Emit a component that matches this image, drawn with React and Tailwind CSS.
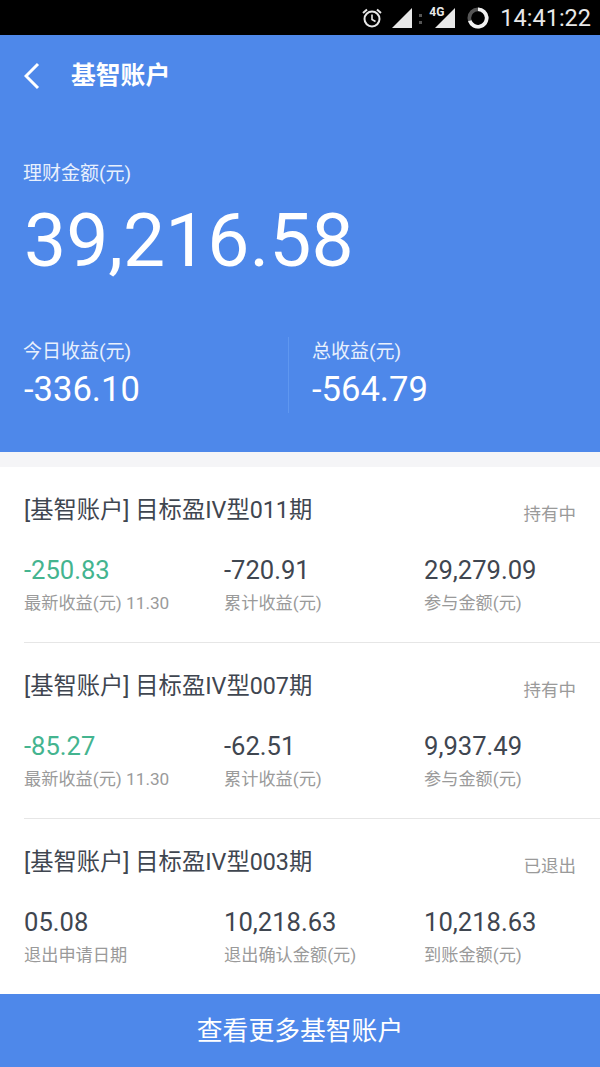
const cjk = "font-['Roboto','Noto_Sans_CJK_SC',sans-serif]";

function Row({ title, status, cols }) {
  return (
    <div className="h-[175px] pl-6 flex flex-col">
      <div className="flex items-start justify-between pr-6 pt-[27px] h-[71px]">
        <div className="text-[23.3px] leading-[32px] text-[#3f4650]">{title}</div>
        <div className="text-[17.5px] leading-[26px] text-[#9a9a9a] mt-[7px]">{status}</div>
      </div>
      <div className="grid grid-cols-[200px_200px_1fr] mt-[15px]">
        {cols.map((c, i) => (
          <div key={i} className="flex flex-col">
            <div className={`text-[25.6px] leading-[34px] ${c.green ? "text-[#44b48f]" : "text-[#3f4650]"}`}>{c.value}</div>
            <div className="text-[17.2px] leading-[24px] mt-[4px] text-[#9a9a9a] whitespace-nowrap">{c.label}</div>
          </div>
        ))}
      </div>
    </div>
  );
}

function StatusBar() {
  return (
    <div className="h-[35px] bg-black flex items-center justify-end pr-[9px] text-[#e8e8e8]">
      <svg width="22" height="22" viewBox="0 0 22 22" fill="none" stroke="currentColor" strokeWidth="2" className="mr-[9px] mt-[1px]">
        <circle cx="11" cy="12" r="7.5" />
        <path d="M11 7.5V12.5L14.5 14.5" strokeWidth="1.6" />
        <path d="M2 6L6 2.5M20 6L16 2.5" />
      </svg>
      <svg width="20" height="20" viewBox="0 0 20 20">
        <path d="M0 20L20 0V20Z" fill="currentColor" />
      </svg>
      <div className="relative w-[43px] h-[24px] mr-[12px]">
        <span className="absolute left-[17px] top-[-1px] text-[12px] leading-[14px] font-bold font-['Roboto',sans-serif]">4G</span>
        <span className="absolute left-[7px] top-[8px] w-[3px] h-[3px] bg-[#555555]" />
        <span className="absolute left-[7px] top-[15px] w-[3px] h-[3px] bg-[#555555]" />
        <svg width="20" height="20" viewBox="0 0 20 20" className="absolute right-[0px] top-[2px]">
          <path d="M0 20L20 0V20Z" fill="currentColor" />
        </svg>
      </div>
      <svg width="22" height="22" viewBox="0 0 24 24" fill="none" className="mr-[11px]">
        <circle cx="12" cy="12" r="9.5" stroke="#555555" strokeWidth="4" />
        <path d="M12 2.5A9.5 9.5 0 1 1 3 15" stroke="#f2f2f2" strokeWidth="4" />
      </svg>
      <span className="text-[23.5px] leading-[30px] font-['Roboto',sans-serif]">14:41:22</span>
    </div>
  );
}

export default function App() {
  return (
    <div className={`w-[600px] h-[1067px] bg-white overflow-hidden flex flex-col ${cjk}`}>
      <StatusBar />
      <div className="h-[417px] bg-[#4e88ea] text-white pl-6 flex flex-col">
        <div className="flex items-center h-[82px]">
          <svg width="18" height="28" viewBox="0 0 18 28" fill="none" stroke="white" strokeWidth="3" className="shrink-0">
            <path d="M14 2L2 14L14 26" />
          </svg>
          <div className="ml-[29px] text-[24.8px] font-bold leading-[32px]">基智账户</div>
        </div>
        <div className="mt-[44px] -ml-px text-[19px] leading-[26px] text-[#e8f0fd]">理财金额(元)</div>
        <div className="text-[75px] leading-[88px] mt-[9px]">39,216.58</div>
        <div className="flex mt-[53px] h-[76px]">
          <div className="w-[264px] flex flex-col">
            <div className="text-[19px] leading-[26px] text-[#e8f0fd] mt-[2px] -ml-px">今日收益(元)</div>
            <div className="text-[34.6px] leading-[44px] mt-[2px]">-336.10</div>
          </div>
          <div className="w-px h-[76px] bg-[#5f97f0]" />
          <div className="pl-[23px] flex flex-col">
            <div className="text-[19px] leading-[26px] text-[#e8f0fd] mt-[2px]">总收益(元)</div>
            <div className="text-[34.6px] leading-[44px] mt-[2px]">-564.79</div>
          </div>
        </div>
      </div>
      <div className="h-[15px] bg-[#f5f5f7]" />
      <Row
        title="[基智账户] 目标盈IV型011期"
        status="持有中"
        cols={[
          { value: "-250.83", label: "最新收益(元) 11.30", green: true },
          { value: "-720.91", label: "累计收益(元)" },
          { value: "29,279.09", label: "参与金额(元)" },
        ]}
      />
      <div className="ml-6 h-px bg-[#e6e6e6]" />
      <Row
        title="[基智账户] 目标盈IV型007期"
        status="持有中"
        cols={[
          { value: "-85.27", label: "最新收益(元) 11.30", green: true },
          { value: "-62.51", label: "累计收益(元)" },
          { value: "9,937.49", label: "参与金额(元)" },
        ]}
      />
      <div className="ml-6 h-px bg-[#e6e6e6]" />
      <Row
        title="[基智账户] 目标盈IV型003期"
        status="已退出"
        cols={[
          { value: "05.08", label: "退出申请日期" },
          { value: "10,218.63", label: "退出确认金额(元)" },
          { value: "10,218.63", label: "到账金额(元)" },
        ]}
      />
      <div className="flex-1 bg-[#4e88ea] text-white flex items-center justify-center pt-px text-[25.8px]">查看更多基智账户</div>
    </div>
  );
}
